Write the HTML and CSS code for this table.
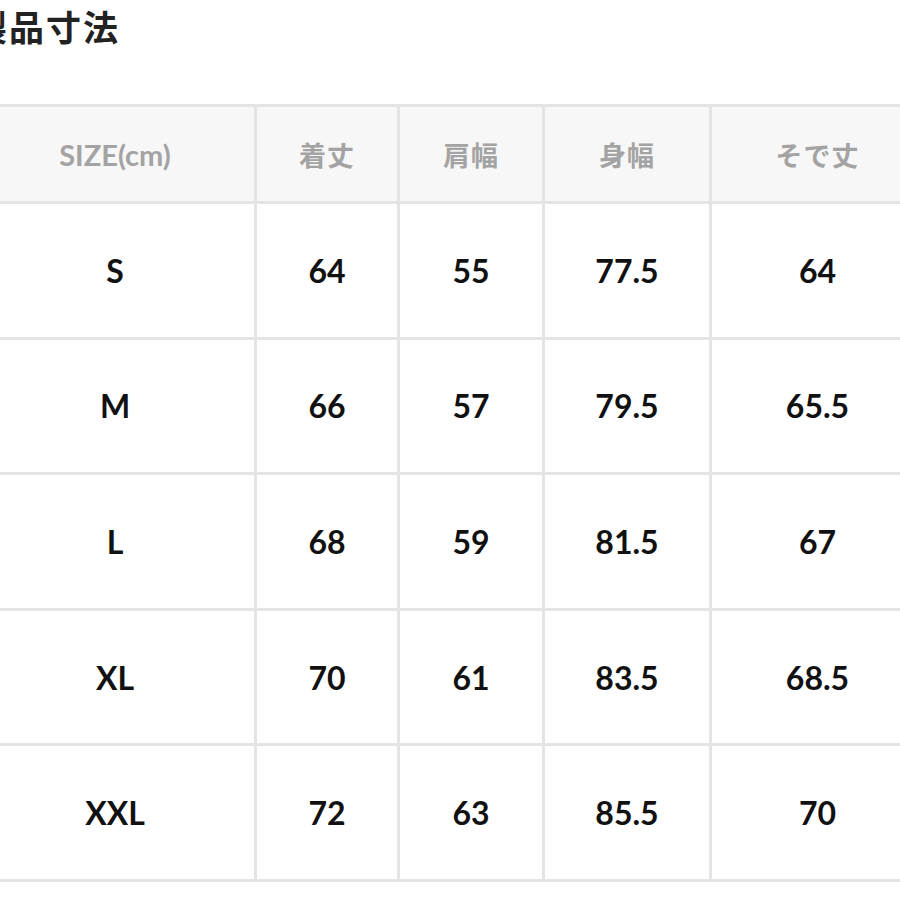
FILE: index.html
```html
<!DOCTYPE html>
<html lang="ja">
<head>
<meta charset="utf-8">
<link rel="stylesheet" href="styles.css">
</head>
<body>
<div class="page">
  <h1 class="title">製品寸法</h1>
  <table class="size-table">
    <colgroup>
      <col class="c1"><col class="c2"><col class="c3"><col class="c4"><col class="c5">
    </colgroup>
    <thead>
      <tr>
        <th class="latin">SIZE(cm)</th>
        <th>着丈</th>
        <th>肩幅</th>
        <th>身幅</th>
        <th>そで丈</th>
      </tr>
    </thead>
    <tbody>
      <tr><td>S</td><td>64</td><td>55</td><td>77.5</td><td>64</td></tr>
      <tr><td>M</td><td>66</td><td>57</td><td>79.5</td><td>65.5</td></tr>
      <tr><td>L</td><td>68</td><td>59</td><td>81.5</td><td>67</td></tr>
      <tr><td>XL</td><td>70</td><td>61</td><td>83.5</td><td>68.5</td></tr>
      <tr><td>XXL</td><td>72</td><td>63</td><td>85.5</td><td>70</td></tr>
    </tbody>
  </table>
</div>
</body>
</html>
```

FILE: styles.css
```css
html, body {
  margin: 0;
  padding: 0;
  background: #ffffff;
  overflow: hidden;
}
.page {
  width: 900px;
  height: 900px;
  overflow: hidden;
}
.title {
  margin: 0 0 0 -28px;
  padding-top: 6px;
  height: 104px;
  box-sizing: border-box;
  font-family: "Noto Sans CJK JP", sans-serif;
  font-weight: 700;
  font-size: 35px;
  line-height: 40px;
  color: #222222;
  letter-spacing: 2px;
}
.size-table {
  margin-left: -27px;
  border-collapse: collapse;
  table-layout: fixed;
  width: 950px;
  font-family: Lato, "Noto Sans CJK JP", sans-serif;
}
.c1 { width: 281px; }
.c2 { width: 143px; }
.c3 { width: 145px; }
.c4 { width: 167px; }
.c5 { width: 214px; }
.size-table th,
.size-table td {
  border: 3px solid #e4e4e4;
  text-align: center;
  vertical-align: middle;
  padding: 0;
}
.size-table th {
  height: 94px;
  background: #f7f7f7;
  color: #a3a3a3;
  font-family: "Noto Sans CJK JP", sans-serif;
  font-weight: 700;
  font-size: 27px;
  letter-spacing: 1px;
}
.size-table th.latin {
  font-family: Lato, sans-serif;
  font-size: 29px;
  letter-spacing: 0;
}
.size-table td {
  height: 132.6px;
  color: #111111;
  font-weight: 700;
  font-size: 32px;
}
```
